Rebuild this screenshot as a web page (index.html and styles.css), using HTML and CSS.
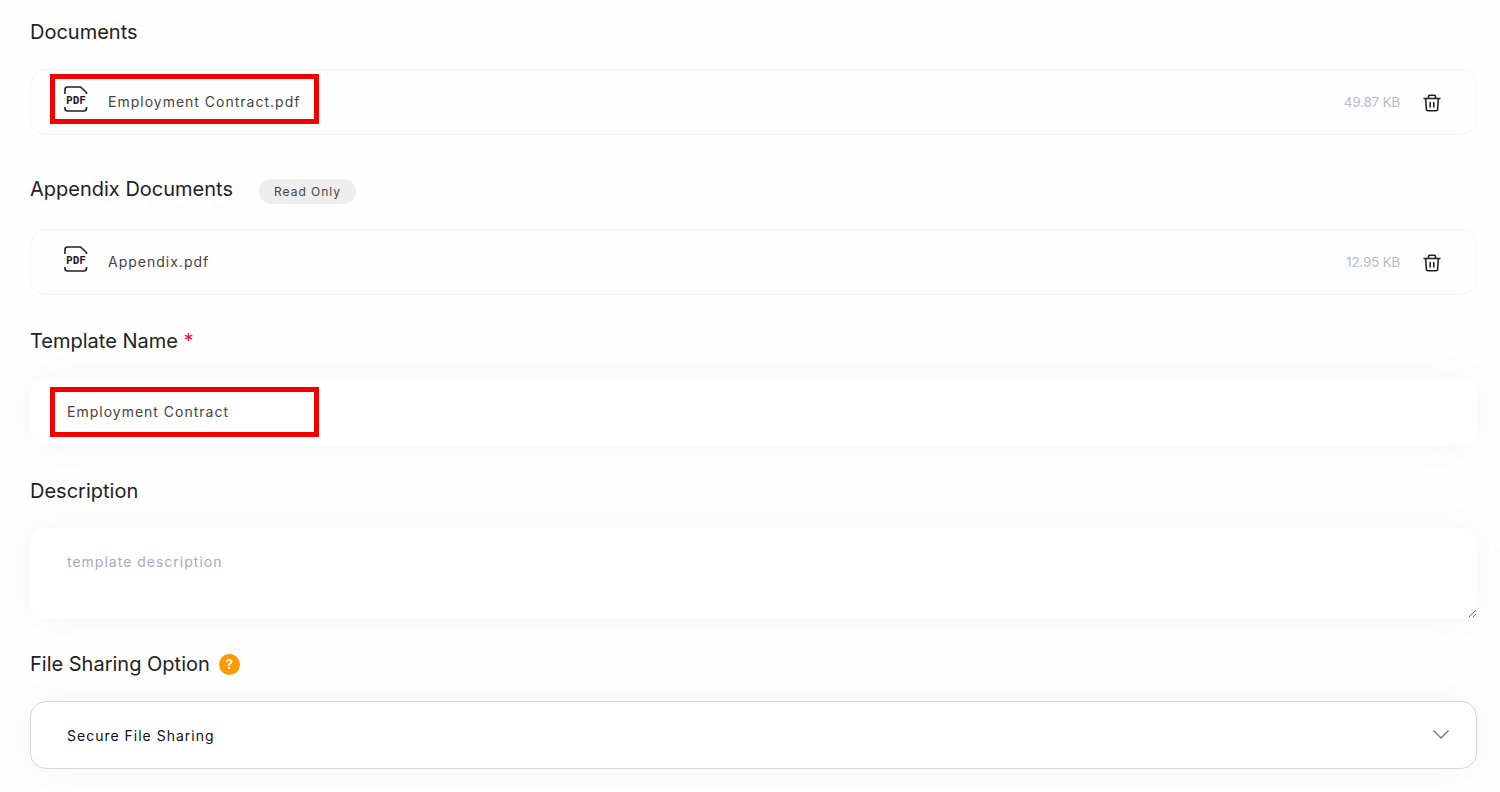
FILE: index.html
```html
<!DOCTYPE html>
<html lang="en">
<head>
    <meta charset="UTF-8">
    <meta name="viewport" content="width=device-width, initial-scale=1.0">
    <title>Template Details</title>
    <link rel="stylesheet" href="styles.css">
</head>
<body>

<form class="template-form">
    <!-- Documents -->
    <section class="documents">
        <div class="heading">
            <h2>Documents</h2>
        </div>
        <div class="file-row marked">
            <svg class="pdf-icon" viewBox="0 0 24 26" aria-hidden="true">
                <path d="M1 8V3.500Q1 1 3.500 1H16.500L22.500 6.500V8M1 21V22.500Q1 25 3.500 25H20Q22.500 25 22.500 22.500V21"/>
                <text x="12" y="18" text-anchor="middle">PDF</text>
            </svg>
            <span class="file-name">Employment Contract.pdf</span>
            <span class="file-size">49.87 KB</span>
            <button type="button" class="delete" aria-label="Delete Employment Contract.pdf">
                <svg viewBox="0 0 18 18" aria-hidden="true">
                    <path d="M0.500 4.500H17.500M5.500 4.500V2.500Q5.500 1.300 6.700 1.300H11.300Q12.500 1.300 12.500 2.500V4.500M2.600 4.500L3.400 15.200Q3.500 16.700 5 16.700H13Q14.500 16.700 14.600 15.200L15.400 4.500M7.200 8V13.500M10.800 8V13.500"/>
                </svg>
            </button>
        </div>
    </section>

    <!-- Appendix -->
    <section class="documents">
        <div class="heading">
            <h2>Appendix Documents</h2>
            <span class="badge">Read Only</span>
        </div>
        <div class="file-row">
            <svg class="pdf-icon" viewBox="0 0 24 26" aria-hidden="true">
                <path d="M1 8V3.500Q1 1 3.500 1H16.500L22.500 6.500V8M1 21V22.500Q1 25 3.500 25H20Q22.500 25 22.500 22.500V21"/>
                <text x="12" y="18" text-anchor="middle">PDF</text>
            </svg>
            <span class="file-name">Appendix.pdf</span>
            <span class="file-size">12.95 KB</span>
            <button type="button" class="delete" aria-label="Delete Appendix.pdf">
                <svg viewBox="0 0 18 18" aria-hidden="true">
                    <path d="M0.500 4.500H17.500M5.500 4.500V2.500Q5.500 1.300 6.700 1.300H11.300Q12.500 1.300 12.500 2.500V4.500M2.600 4.500L3.400 15.200Q3.500 16.700 5 16.700H13Q14.500 16.700 14.600 15.200L15.400 4.500M7.200 8V13.500M10.800 8V13.500"/>
                </svg>
            </button>
        </div>
    </section>

    <!-- Template info -->
    <div class="field">
        <label for="templateName">Template Name <span class="required">*</span></label>
        <div class="control marked">
            <input type="text" id="templateName" value="Employment Contract" required>
        </div>
    </div>

    <div class="field">
        <label for="description">Description</label>
        <div class="control">
            <textarea id="description" placeholder="template description"></textarea>
        </div>
    </div>

    <div class="field">
        <div class="label-row">
            <label for="sharing">File Sharing Option</label>
            <button type="button" class="help" aria-label="Help">?</button>
        </div>
        <div class="control">
            <select id="sharing">
                <option>Secure File Sharing</option>
            </select>
            <svg class="arrow" viewBox="0 0 16 9" aria-hidden="true"><path d="M0.500 0.500L8 8L15.500 0.500"/></svg>
        </div>
    </div>
</form>

</body>
</html>
```
FILE: styles.css
```css
*,
*::after {
    box-sizing: border-box;
}
body {
    margin: 0;
    background-color: #fefefe;
    color: #222;
    font-family: Inter, sans-serif;
}
.template-form {
    padding: 20px 23px 23px 30px;
}
.documents {
    margin-bottom: 34px;
}
.documents + .documents {
    padding-top: 8px;
}
.heading {
    display: flex;
    align-items: flex-start;
    gap: 26px;
    margin-bottom: 25px;
}
h2,
label {
    margin: 0;
    font-size: 20px;
    font-weight: 400;
    line-height: 24px;
}
.badge {
    margin-top: 2px;
    padding: 0 15px;
    border-radius: 13px;
    background-color: #eee;
    color: #444;
    font-size: 12px;
    line-height: 25px;
    letter-spacing: 1px;
}
.file-row {
    position: relative;
    display: flex;
    align-items: center;
    height: 66px;
    padding: 0 35px 0 33px;
    border: 1px solid #f6f6f6;
    border-radius: 16px;
}
.pdf-icon {
    width: 24px;
    height: 26px;
    margin: 0 20px 7px 0;
    fill: none;
    stroke: #222;
    stroke-width: 1.6;
}
.pdf-icon text {
    fill: #222;
    stroke: none;
    font: bold 11px "DejaVu Sans Mono", monospace;
}
.file-name {
    flex: 1;
    color: #444;
    font-size: 14px;
    line-height: 18px;
    letter-spacing: 1px;
}
.file-size {
    margin-right: 23px;
    color: #b9b8c9;
    font-size: 13px;
}
button {
    padding: 0;
    border: none;
    background: none;
    cursor: pointer;
}
.delete svg {
    display: block;
    width: 18px;
    height: 18px;
    margin-top: 2px;
    fill: none;
    stroke: #222;
    stroke-width: 1.6;
}
.field {
    margin-bottom: 34px;
}
.field:last-child {
    margin-bottom: 0;
}
.field label {
    display: block;
}
.required {
    color: #f5144b;
}
.label-row {
    display: flex;
    align-items: center;
    gap: 9px;
}
.help {
    width: 21px;
    height: 21px;
    border-radius: 50%;
    background-color: #f90;
    color: #fff;
    font: bold 13px Inter, sans-serif;
}
.control {
    position: relative;
    margin-top: 25px;
}
input,
textarea,
select {
    display: block;
    width: 100%;
    padding: 0 37px;
    border: none;
    border-radius: 16px;
    outline: none;
    background-color: #fff;
    box-shadow: 0 0 40px rgba(0, 0, 0, 0.04);
    color: #444;
    font: 14px Inter, sans-serif;
    letter-spacing: 1px;
}
input {
    height: 67px;
}
textarea {
    height: 90px;
    padding-top: 25px;
    resize: vertical;
}
textarea::placeholder {
    color: #a9abc0;
}
select {
    height: 68px;
    padding: 0 36px;
    border: 1px solid #d8d8d8;
    appearance: none;
    color: #111;
}
.arrow {
    position: absolute;
    top: 29px;
    right: 28px;
    width: 16px;
    height: 9px;
    fill: none;
    stroke: #777;
    stroke-width: 1.4;
    pointer-events: none;
}
/* red highlight frame */
.marked::after {
    content: "";
    position: absolute;
    top: 9px;
    left: 20px;
    width: 269px;
    height: 50px;
    border: 5px solid #f50000;
    pointer-events: none;
}
.file-row.marked::after {
    top: 4px;
    left: 19px;
}
```
